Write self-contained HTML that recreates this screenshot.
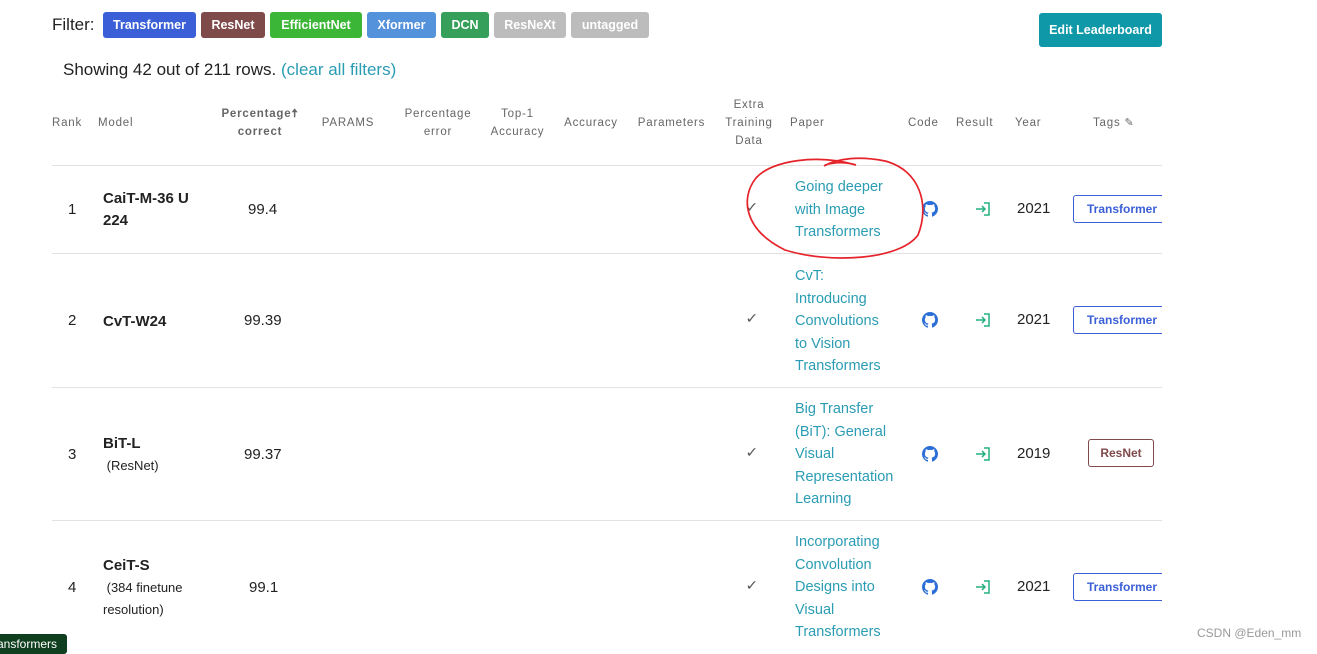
<!DOCTYPE html>
<html><head><meta charset="utf-8"><style>
body{margin:0;width:1317px;height:648px;background:#fff;position:relative;overflow:hidden;font-family:"Liberation Sans",sans-serif;color:#222}
.a{position:absolute;white-space:nowrap}
.tag{position:absolute;top:12px;height:26px;border-radius:3px;color:#fff;font-weight:bold;font-size:12.5px;line-height:26px;text-align:center}
.h{position:absolute;font-size:11.5px;color:#666;letter-spacing:.8px;text-align:center;line-height:18px}
.line{position:absolute;left:52px;width:1110px;height:1px;background:#e2e2e2}
.p{position:absolute;left:795px;color:#2a9cb3;font-size:14.5px;line-height:22.5px}
.btn{position:absolute;height:26px;border:1px solid;border-radius:3px;font-weight:bold;font-size:12px;line-height:26px;text-align:center;background:#fff}
.m{position:absolute;left:103px;font-weight:bold;font-size:15px;line-height:22px}
.s{font-weight:normal;font-size:13px}
.n{position:absolute;font-size:15px}
.ck{position:absolute;left:746px;font-size:14px;color:#555;font-family:"DejaVu Sans",sans-serif;transform:scaleX(1.1)}
</style></head><body>
<div class="a" style="left:52px;top:13px;font-size:17px;line-height:24px">Filter:</div>
<div class="tag" style="left:103px;width:93px;background:#3b5fd6">Transformer</div>
<div class="tag" style="left:201px;width:64px;background:#7f4a4a">ResNet</div>
<div class="tag" style="left:270px;width:92px;background:#3bb637">EfficientNet</div>
<div class="tag" style="left:367px;width:69px;background:#5592dc">Xformer</div>
<div class="tag" style="left:441px;width:48px;background:#36a05a">DCN</div>
<div class="tag" style="left:494px;width:72px;background:#bcbcbc">ResNeXt</div>
<div class="tag" style="left:571px;width:78px;background:#bcbcbc">untagged</div>
<div class="a" style="left:1039px;top:13px;width:123px;height:34px;background:#0e98a8;border-radius:3px;color:#fff;font-weight:bold;font-size:12.5px;line-height:34px;text-align:center">Edit Leaderboard</div>
<div class="a" style="left:63px;top:59px;font-size:17px;line-height:22px">Showing 42 out of 211 rows. <span style="color:#2a9cb3">(clear all filters)</span></div>

<div class="h" style="left:52px;top:114px">Rank</div>
<div class="h" style="left:98px;top:114px">Model</div>
<div class="h" style="left:215px;top:105px;width:90px;font-weight:bold">Percentage🠅<br>correct</div>
<div class="h" style="left:318px;top:114px;width:60px">PARAMS</div>
<div class="h" style="left:398px;top:105px;width:80px">Percentage<br>error</div>
<div class="h" style="left:485px;top:105px;width:65px">Top-1<br>Accuracy</div>
<div class="h" style="left:560px;top:114px;width:62px">Accuracy</div>
<div class="h" style="left:633px;top:114px;width:77px">Parameters</div>
<div class="h" style="left:720px;top:96px;width:58px">Extra<br>Training<br>Data</div>
<div class="h" style="left:790px;top:114px">Paper</div>
<div class="h" style="left:908px;top:114px">Code</div>
<div class="h" style="left:956px;top:114px">Result</div>
<div class="h" style="left:1015px;top:114px">Year</div>
<div class="h" style="left:1093px;top:114px">Tags <span style="font-size:11px">✎</span></div>

<div class="line" style="top:165px"></div>
<div class="line" style="top:253px"></div>
<div class="line" style="top:387px"></div>
<div class="line" style="top:520px"></div>

<div class="n" style="left:68px;top:201px">1</div>
<div class="m" style="top:188px">CaiT-M-36 U<br>224</div>
<div class="n" style="left:248px;top:201px">99.4</div>
<div class="ck" style="top:200px">✓</div>
<div class="p" style="top:176px">Going deeper<br>with Image<br>Transformers</div>

<div class="n" style="left:68px;top:312px">2</div>
<div class="m" style="top:311px">CvT-W24</div>
<div class="n" style="left:244px;top:312px">99.39</div>
<div class="ck" style="top:311px">✓</div>
<div class="p" style="top:265px">CvT:<br>Introducing<br>Convolutions<br>to Vision<br>Transformers</div>

<div class="n" style="left:68px;top:446px">3</div>
<div class="m" style="top:433px">BiT-L<br><span class="s">&nbsp;(ResNet)</span></div>
<div class="n" style="left:244px;top:446px">99.37</div>
<div class="ck" style="top:445px">✓</div>
<div class="p" style="top:398px">Big Transfer<br>(BiT): General<br>Visual<br>Representation<br>Learning</div>

<div class="n" style="left:68px;top:579px">4</div>
<div class="m" style="top:555px">CeiT-S<br><span class="s">&nbsp;(384 finetune<br>resolution)</span></div>
<div class="n" style="left:249px;top:579px">99.1</div>
<div class="ck" style="top:578px">✓</div>
<div class="p" style="top:531px">Incorporating<br>Convolution<br>Designs into<br>Visual<br>Transformers</div>

<svg width="0" height="0" style="position:absolute"><defs>
<symbol id="gh" viewBox="0 0 16 16"><path fill="#2b6fd6" d="M8 0C3.58 0 0 3.58 0 8c0 3.54 2.29 6.530 5.470 7.590.4.07.55-.17.55-.38 0-.19-.01-.82-.01-1.49-2.01.37-2.53-.49-2.69-.94-.09-.23-.48-.94-.82-1.13-.28-.15-.68-.52-.01-.53.63-.01 1.08.58 1.23.82.72 1.21 1.870.87 2.330.66.07-.52.28-.87.51-1.07-1.78-.2-3.64-.89-3.64-3.95 0-.87.31-1.59.82-2.15-.08-.2-.36-1.02.08-2.12 0 0 .67-.21 2.2.82.64-.18 1.32-.27 2-.27.68 0 1.36.09 2 .27 1.53-1.04 2.2-.82 2.2-.82.44 1.1.16 1.92.08 2.12.51.56.82 1.27.82 2.15 0 3.07-1.87 3.75-3.65 3.95.29.25.54.73.54 1.48 0 1.07-.01 1.93-.01 2.2 0 .21.15.46.55.38A8.013 8.013 0 0016 8c0-4.42-3.58-8-8-8z"/></symbol>
<symbol id="rs" viewBox="0 0 16 16"><g fill="none" stroke="#22b07d" stroke-width="1.5"><path d="M9 2h5v12H9"/><path d="M1 8h9M7 5l3 3-3 3"/></g></symbol>
</defs></svg>

<svg class="a" style="left:922px;top:201px" width="16" height="16"><use href="#gh"/></svg>
<svg class="a" style="left:975px;top:201px" width="16" height="16"><use href="#rs"/></svg>
<div class="n" style="left:1017px;top:200px">2021</div>
<div class="btn" style="left:1073px;top:195px;width:96px;color:#3b5fd6;border-color:#3b5fd6">Transformer</div>

<svg class="a" style="left:922px;top:312px" width="16" height="16"><use href="#gh"/></svg>
<svg class="a" style="left:975px;top:312px" width="16" height="16"><use href="#rs"/></svg>
<div class="n" style="left:1017px;top:311px">2021</div>
<div class="btn" style="left:1073px;top:306px;width:96px;color:#3b5fd6;border-color:#3b5fd6">Transformer</div>

<svg class="a" style="left:922px;top:446px" width="16" height="16"><use href="#gh"/></svg>
<svg class="a" style="left:975px;top:446px" width="16" height="16"><use href="#rs"/></svg>
<div class="n" style="left:1017px;top:445px">2019</div>
<div class="btn" style="left:1088px;top:439px;width:64px;color:#7f4a4a;border-color:#7f4a4a">ResNet</div>

<svg class="a" style="left:922px;top:579px" width="16" height="16"><use href="#gh"/></svg>
<svg class="a" style="left:975px;top:579px" width="16" height="16"><use href="#rs"/></svg>
<div class="n" style="left:1017px;top:578px">2021</div>
<div class="btn" style="left:1073px;top:573px;width:96px;color:#3b5fd6;border-color:#3b5fd6">Transformer</div>
<div class="a" style="left:1162px;top:160px;width:155px;height:488px;background:#fff"></div>

<svg class="a" style="left:0;top:0" width="1317" height="648"><path d="M825 165 C838 161 850 163 856 165 C818 154 772 160 756 178 C740 198 744 230 785 250 C830 264 900 260 918 235 C930 205 920 170 885 161 C860 156 838 158 824 166" fill="none" stroke="#e5232a" stroke-width="1.7"/></svg>

<div class="a" style="left:-5px;top:634px;width:70px;height:20px;background:#103f1f;border-radius:3px;color:#fff;font-size:12px;line-height:20px;padding-left:2px">ansformers</div>
<div class="a" style="left:1197px;top:626px;font-size:12px;color:#999">CSDN @Eden_mm</div>
</body></html>
